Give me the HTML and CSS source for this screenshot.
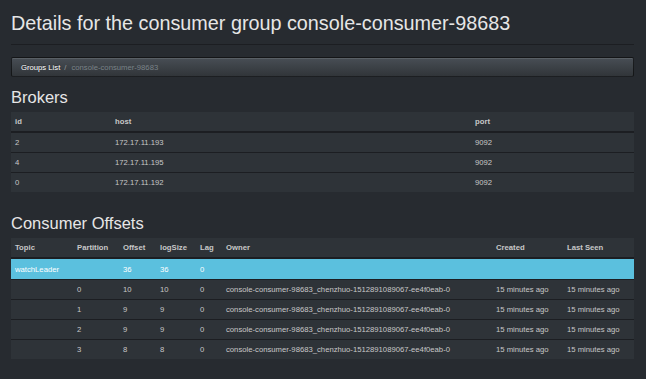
FILE: index.html
```html
<!DOCTYPE html>
<html lang="en">
<head>
    <meta charset="UTF-8">
    <meta name="viewport" content="width=device-width, initial-scale=1.0">
    <title>Consumer group console-consumer-98683</title>
    <link rel="stylesheet" href="styles.css">
</head>
<body>
    <div class="container">
        <div class="page-header">
            <h1>Details for the consumer group console-consumer-98683</h1>
        </div>

        <ol class="breadcrumb">
            <li><a href="#">Groups List</a></li>
            <li class="active">console-consumer-98683</li>
        </ol>

        <h2>Brokers</h2>
        <table class="table brokers">
            <colgroup>
                <col class="c-id">
                <col class="c-host">
                <col>
            </colgroup>
            <thead>
                <tr><th>id</th><th>host</th><th>port</th></tr>
            </thead>
            <tbody>
                <tr><td>2</td><td>172.17.11.193</td><td>9092</td></tr>
                <tr><td>4</td><td>172.17.11.195</td><td>9092</td></tr>
                <tr><td>0</td><td>172.17.11.192</td><td>9092</td></tr>
            </tbody>
        </table>

        <h2>Consumer Offsets</h2>
        <table class="table offsets">
            <colgroup>
                <col class="c-topic">
                <col class="c-partition">
                <col class="c-offset">
                <col class="c-logsize">
                <col class="c-lag">
                <col class="c-owner">
                <col class="c-created">
                <col>
            </colgroup>
            <thead>
                <tr>
                    <th>Topic</th><th>Partition</th><th>Offset</th><th>logSize</th>
                    <th>Lag</th><th>Owner</th><th>Created</th><th>Last Seen</th>
                </tr>
            </thead>
            <tbody>
                <tr class="info">
                    <td>watchLeader</td><td></td><td>36</td><td>36</td><td>0</td><td></td><td></td><td></td>
                </tr>
                <tr>
                    <td></td><td>0</td><td>10</td><td>10</td><td>0</td>
                    <td>console-consumer-98683_chenzhuo-1512891089067-ee4f0eab-0</td>
                    <td>15 minutes ago</td><td>15 minutes ago</td>
                </tr>
                <tr>
                    <td></td><td>1</td><td>9</td><td>9</td><td>0</td>
                    <td>console-consumer-98683_chenzhuo-1512891089067-ee4f0eab-0</td>
                    <td>15 minutes ago</td><td>15 minutes ago</td>
                </tr>
                <tr>
                    <td></td><td>2</td><td>9</td><td>9</td><td>0</td>
                    <td>console-consumer-98683_chenzhuo-1512891089067-ee4f0eab-0</td>
                    <td>15 minutes ago</td><td>15 minutes ago</td>
                </tr>
                <tr>
                    <td></td><td>3</td><td>8</td><td>8</td><td>0</td>
                    <td>console-consumer-98683_chenzhuo-1512891089067-ee4f0eab-0</td>
                    <td>15 minutes ago</td><td>15 minutes ago</td>
                </tr>
            </tbody>
        </table>
    </div>
</body>
</html>
```

FILE: styles.css
```css
* {
    box-sizing: border-box;
}

body {
    margin: 0;
    background-color: #272b30;
    color: #c8c8c8;
    font-family: 'Liberation Sans', Arial, sans-serif;
    font-size: 7.7px;
    line-height: 1.43;
}

.container {
    padding: 0 12px 0 11px;
}

.page-header {
    padding-bottom: 9px;
    border-bottom: 1px solid #1c1e22;
    margin-bottom: 12px;
}

h1 {
    margin: 13px 0 0;
    font-size: 19.8px;
    font-weight: 400;
    line-height: 1.1;
    color: #e6e6e6;
}

h2 {
    margin: 11px 0 6px;
    font-size: 16.5px;
    font-weight: 400;
    line-height: 1.1;
    color: #e6e6e6;
}

/* breadcrumb */
.breadcrumb {
    list-style: none;
    margin: 0;
    padding: 4px 9px 3px;
    display: flex;
    border: 1px solid rgba(0, 0, 0, 0.6);
    border-radius: 2px;
    background-image: linear-gradient(#484e55, #3a3f44 60%, #313539);
    box-shadow: inset 0 1px 0 rgba(255, 255, 255, 0.1);
}

.breadcrumb a {
    color: #fff;
    text-decoration: none;
    text-shadow: 0 -1px 0 rgba(0, 0, 0, 0.3);
}

.breadcrumb li + li::before {
    content: "/";
    color: #999;
    padding: 0 5px 0 4px;
}

.breadcrumb .active {
    color: #7a8288;
}

/* tables */
.table {
    width: 100%;
    border-collapse: collapse;
    table-layout: fixed;
    background-color: #2e3338;
    margin-bottom: 22px;
}

.table th,
.table td {
    padding: 4px 4px 3px;
    line-height: 12px;
    text-align: left;
    white-space: nowrap;
    overflow: hidden;
}

.table th {
    font-weight: 700;
    border-bottom: 2px solid #1c1e22;
}

.table td {
    border-top: 1px solid #1c1e22;
}

.table thead + tbody tr:first-child td {
    border-top: 0;
}

.table tr.info td {
    background-color: #5bc0de;
    color: #fff;
    padding-top: 5px;
}

.c-id { width: 100px; }
.c-host { width: 360px; }

.c-topic { width: 62px; }
.c-partition { width: 46px; }
.c-offset { width: 37px; }
.c-logsize { width: 40px; }
.c-lag { width: 26px; }
.c-owner { width: 270px; }
.c-created { width: 71px; }
```
